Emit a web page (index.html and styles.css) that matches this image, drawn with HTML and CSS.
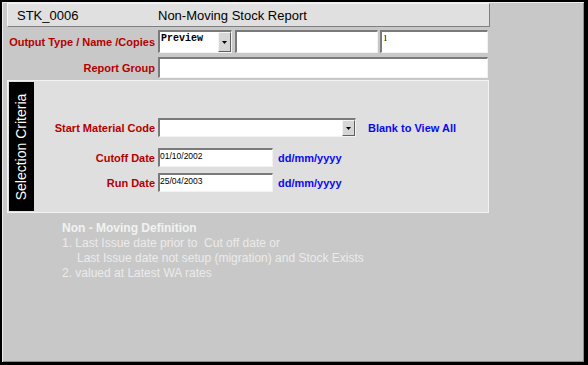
FILE: index.html
```html
<!DOCTYPE html>
<html lang="en">
<head>
  <meta charset="UTF-8" />
  <title>Non-Moving Stock Report</title>
  <link rel="stylesheet" href="styles.css">
</head>
<body>
  <div class="window">

    <!-- Title bar -->
    <div class="header">
      <span class="code">STK_0006</span>
      <span class="title">Non-Moving Stock Report</span>
    </div>

    <!-- Output options -->
    <div class="row row-output">
      <label class="label">Output Type / Name /Copies</label>
      <div class="field combo combo-type">
        <span class="combo-value">Preview</span>
        <span class="drop-btn">
          <svg width="5" height="3" viewBox="0 0 5 3"><path d="M0 0h5L2.5 3z" fill="#000"/></svg>
        </span>
      </div>
      <div class="field name-field"></div>
      <div class="field copies-field"><span class="copies-value">1</span></div>
    </div>

    <div class="row row-group">
      <label class="label">Report Group</label>
      <div class="field group-field"></div>
    </div>

    <!-- Selection criteria -->
    <section class="criteria">
      <div class="criteria-tab"><span>Selection Criteria</span></div>
      <div class="criteria-body">
        <div class="row row-material">
          <label class="label">Start Material Code</label>
          <div class="field combo combo-material">
            <span class="combo-value"></span>
            <span class="drop-btn">
              <svg width="5" height="3" viewBox="0 0 5 3"><path d="M0 0h5L2.5 3z" fill="#000"/></svg>
            </span>
          </div>
          <span class="hint">Blank to View All</span>
        </div>
        <div class="row row-cutoff">
          <label class="label">Cutoff Date</label>
          <div class="field date-field"><span class="date-value">01/10/2002</span></div>
          <span class="hint date-hint">dd/mm/yyyy</span>
        </div>
        <div class="row row-run">
          <label class="label">Run Date</label>
          <div class="field date-field"><span class="date-value">25/04/2003</span></div>
          <span class="hint date-hint">dd/mm/yyyy</span>
        </div>
      </div>
    </section>

    <!-- Definition notes -->
    <div class="notes">
      <div class="notes-title">Non - Moving Definition</div>
      <div>1. Last Issue date prior to &nbsp;Cut off date or</div>
      <div class="indent">Last Issue date not setup (migration) and Stock Exists</div>
      <div>2. valued at Latest WA rates</div>
    </div>

  </div>
</body>
</html>
```

FILE: styles.css
```css
body {
  margin: 0;
  font-family: 'Liberation Sans', Arial, sans-serif;
}

.window {
  width: 588px;
  height: 365px;
  box-sizing: border-box;
  border-style: solid;
  border-color: #000;
  border-width: 2px 4px 3px 2px;
  background-color: #c8c8c8;
  box-shadow: inset 1px 1px 0 #ececec, inset -1px -1px 0 #8c8c8c;
  padding: 1px 0 0 5px;
}

.header {
  width: 483px;
  height: 24px;
  box-sizing: border-box;
  background-color: #e0e0e0;
  border-top: 1px solid #f4f4f4;
  border-left: 1px solid #f4f4f4;
  border-right: 1px solid #808080;
  border-bottom: 1px solid #808080;
  display: flex;
  align-items: center;
  font-size: 13px;
  color: #000;
}

.header .code {
  margin-left: 9px;
  width: 141px;
}

.row {
  display: flex;
  align-items: center;
}

.label {
  width: 151px;
  box-sizing: border-box;
  padding-right: 3px;
  text-align: right;
  font-size: 11px;
  font-weight: bold;
  color: #b40000;
  white-space: nowrap;
}

.field {
  box-sizing: border-box;
  background-color: #fff;
  border-top: 2px solid #7a7a7a;
  border-left: 2px solid #7a7a7a;
  border-right: 1px solid #f2f2f2;
  border-bottom: 1px solid #f2f2f2;
  position: relative;
}

.row-output {
  margin-top: 3px;
  height: 23px;
}

.row-output .field {
  height: 23px;
}

.combo-type {
  width: 74px;
}

.combo-value {
  display: block;
  padding: 1px 0 0 1px;
  font-family: 'Liberation Mono', 'Courier New', monospace;
  font-weight: bold;
  font-size: 10px;
  line-height: 11px;
}

.drop-btn {
  position: absolute;
  top: 0;
  right: 0;
  width: 13px;
  bottom: 0;
  box-sizing: border-box;
  background-color: #d6d6d6;
  border-top: 1px solid #f4f4f4;
  border-left: 1px solid #f4f4f4;
  border-right: 1px solid #606060;
  border-bottom: 1px solid #606060;
  display: flex;
  align-items: center;
  justify-content: center;
}

.name-field {
  width: 143px;
  margin-left: 3px;
}

.copies-field {
  width: 108px;
  margin-left: 2px;
}

.copies-value {
  display: block;
  padding: 1px 0 0 1px;
  font-family: 'Liberation Serif', 'Times New Roman', serif;
  font-size: 9px;
  line-height: 10px;
}

.row-group {
  margin-top: 4px;
  height: 21px;
}

.group-field {
  width: 330px;
  height: 21px;
}

/* Selection criteria panel */
.criteria {
  margin-top: 2px;
  width: 482px;
  height: 133px;
  box-sizing: border-box;
  background-color: #dfdfdf;
  border: 1px solid #f2f2f2;
  display: flex;
}

.criteria-tab {
  margin: 1px;
  width: 25px;
  height: 129px;
  background-color: #000;
  display: flex;
  align-items: center;
  justify-content: center;
}

.criteria-tab span {
  transform: rotate(-90deg);
  white-space: nowrap;
  color: #fff;
  font-size: 14px;
}

.criteria-body {
  padding-top: 37px;
}

.criteria-body .label {
  width: 123px;
}

.row-material .field {
  width: 198px;
  height: 19px;
}

.row-material .drop-btn {
  top: 0;
  bottom: 0;
}

.hint {
  margin-left: 12px;
  font-size: 11px;
  font-weight: bold;
  color: #0a0af0;
}

.row-cutoff {
  margin-top: 11px;
}

.row-run {
  margin-top: 6px;
}

.date-field {
  width: 115px;
  height: 19px;
}

.date-value {
  display: block;
  padding: 1px 0 0 0;
  font-size: 8.5px;
  line-height: 10px;
  color: #000;
}

.date-hint {
  margin-left: 5px;
}

/* Notes */
.notes {
  margin: 8px 0 0 55px;
  font-size: 12px;
  line-height: 15px;
  color: #ebebeb;
}

.notes-title {
  font-weight: bold;
  color: #f2f2f2;
}

.notes .indent {
  padding-left: 15px;
}
```
